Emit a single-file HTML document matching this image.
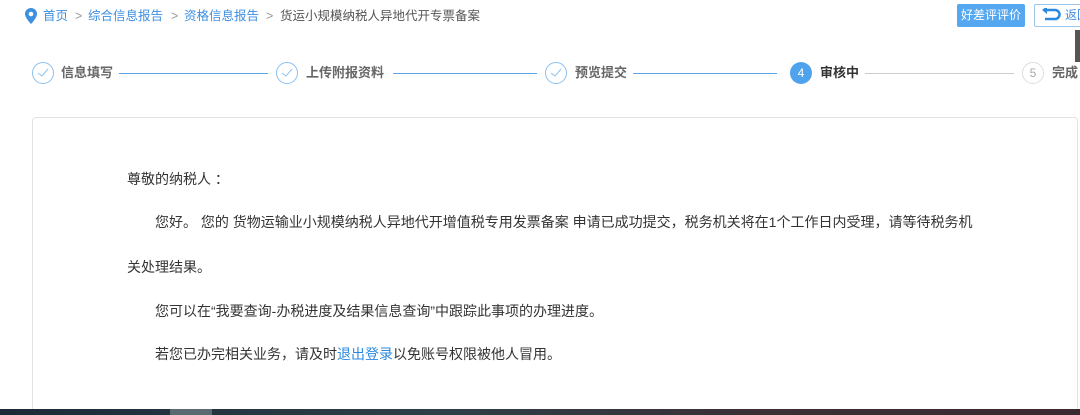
<!DOCTYPE html>
<html><head><meta charset="utf-8"><style>
*{margin:0;padding:0;box-sizing:border-box}
html{width:1080px;height:415px;overflow:hidden}
body{width:1080px;height:415px;overflow:hidden;background:#fff;font-family:"Liberation Sans","Noto Sans CJK SC",sans-serif;position:relative;color:#333}
.a{position:absolute;white-space:nowrap}
.bc{top:7px;font-size:12.5px;color:#999;line-height:18px}
.l{color:#3d8fe0}
.circ{position:absolute;width:22px;height:22px;border-radius:50%;top:62px}
.ck{border:1px solid #8cc0ef}
.lbl{top:64px;font-size:13px;font-weight:bold;color:#666;line-height:18px}
.ln{position:absolute;top:73px;height:1px}
.p{font-size:14px;color:#333;line-height:20px}
</style></head><body>
<svg class="a" style="left:25px;top:8px" width="12" height="16" viewBox="0 0 12 16"><path d="M6 0C2.7 0 0 2.6 0 5.9 0 10 6 16 6 16s6-6 6-10.1C12 2.6 9.3 0 6 0z" fill="#3d8fe0"/><circle cx="6" cy="6" r="2.3" fill="#fff"/></svg>
<div class="a bc l" style="left:43px">首页</div>
<div class="a bc" style="left:75px">&gt;</div>
<div class="a bc l" style="left:88px">综合信息报告</div>
<div class="a bc" style="left:171px">&gt;</div>
<div class="a bc l" style="left:184px">资格信息报告</div>
<div class="a bc" style="left:266px">&gt;</div>
<div class="a bc" style="left:280px;color:#555">货运小规模纳税人异地代开专票备案</div>
<div class="a" style="left:957px;top:4px;width:68px;height:23px;background:#55a8ef;border-radius:2px;color:#fff;font-size:12px;line-height:23px;text-align:center">好差评评价</div>
<div class="a" style="left:1034px;top:4px;width:60px;height:23px;border:1px solid #9cc8ef;border-radius:2px;color:#3d8fe0;font-size:12px;line-height:21px;padding-left:30px">返回</div>
<svg class="a" style="left:1041px;top:8px" width="20" height="14" viewBox="0 0 20 14"><path d="M5 2h9a4.5 4.5 0 0 1 0 9H4" fill="none" stroke="#2b8ae0" stroke-width="2.5"/><path d="M1 2L6 -2V6z" fill="#2b8ae0"/></svg>
<div class="a" style="left:1075px;top:30px;width:5px;height:32px;background:#555"></div>

<div class="circ ck" style="left:32px"></div><svg class="a" style="left:37px;top:68px" width="12" height="10"><path d="M1 5l4 3 6-7" fill="none" stroke="#8cc0ef" stroke-width="1"/></svg>
<div class="a lbl" style="left:61px">信息填写</div>
<div class="ln" style="left:119px;width:149px;background:#5aa5e8"></div>
<div class="circ ck" style="left:276px"></div><svg class="a" style="left:281px;top:68px" width="12" height="10"><path d="M1 5l4 3 6-7" fill="none" stroke="#8cc0ef" stroke-width="1"/></svg>
<div class="a lbl" style="left:306px">上传附报资料</div>
<div class="ln" style="left:393px;width:144px;background:#5aa5e8"></div>
<div class="circ ck" style="left:545px"></div><svg class="a" style="left:550px;top:68px" width="12" height="10"><path d="M1 5l4 3 6-7" fill="none" stroke="#8cc0ef" stroke-width="1"/></svg>
<div class="a lbl" style="left:575px">预览提交</div>
<div class="ln" style="left:633px;width:144px;background:#5aa5e8"></div>
<div class="circ" style="left:790px;background:#4fa3ec;color:#fff;font-size:12px;text-align:center;line-height:22px">4</div>
<div class="a lbl" style="left:820px;color:#333">审核中</div>
<div class="ln" style="left:865px;width:149px;background:#ccc"></div>
<div class="circ" style="left:1022px;border:1px solid #ddd;color:#aaa;font-size:12px;text-align:center;line-height:20px">5</div>
<div class="a lbl" style="left:1052px">完成</div>

<div class="a" style="left:32px;top:117px;width:1046px;height:300px;border:1px solid #e3e3e3;border-radius:4px"></div>
<div class="a p" style="left:127px;top:169px">尊敬的纳税人 ：</div>
<div class="a p" style="left:155px;top:212px">您好。 您的 货物运输业小规模纳税人异地代开增值税专用发票备案 申请已成功提交，税务机关将在1个工作日内受理，请等待税务机</div>
<div class="a p" style="left:127px;top:257px">关处理结果。</div>
<div class="a p" style="left:155px;top:301px">您可以在“我要查询-办税进度及结果信息查询”中跟踪此事项的办理进度。</div>
<div class="a p" style="left:155px;top:344px">若您已办完相关业务，请及时<span style="color:#2b8ae0">退出登录</span>以免账号权限被他人冒用。</div>
<div class="a" style="left:0;top:409px;width:1080px;height:6px;background:linear-gradient(90deg,#1c2a38,#2d3f48 40%,#3a3036 70%,#3b2a30)"></div>
<div class="a" style="left:170px;top:409px;width:42px;height:6px;background:#5a6a70"></div>
</body></html>
